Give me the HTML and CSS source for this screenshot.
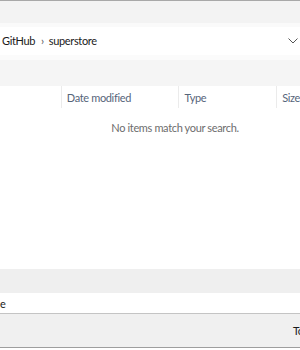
FILE: index.html
```html
<!DOCTYPE html>
<html lang="en">
  <head>
    <meta charset="UTF-8" />
    <meta name="viewport" content="width=device-width, initial-scale=1.0" />
    <title>Save As</title>
    <link rel="stylesheet" href="styles.css">
  </head>
  <body>
    <div class="dialog">

      <div class="toolbar"></div>

      <div class="address">
        <span class="crumb">GitHub</span>
        <span class="crumb-sep">&#8250;</span>
        <span class="crumb">superstore</span>
        <svg class="chevron" width="10" height="6" viewBox="0 0 10 6">
          <path d="M0.5 0.5 L5 5 L9.5 0.5" fill="none" stroke="#555" stroke-width="1"/>
        </svg>
      </div>

      <div class="command-bar"></div>

      <div class="file-list">
        <div class="list-header">
          <div class="col col-name"></div>
          <div class="col col-date">Date modified</div>
          <div class="col col-type">Type</div>
          <div class="col col-size">Size</div>
        </div>
        <div class="empty-msg">No items match your search.</div>
      </div>

      <div class="details-bar"></div>

      <div class="filename-row">
        <span class="filename">e</span>
      </div>

      <div class="footer">
        <span class="footer-btn">Tools</span>
      </div>

    </div>
  </body>
</html>
```

FILE: styles.css
```css
* {
  box-sizing: border-box;
}
body {
  margin: 0;
  padding: 0;
  overflow: hidden;
  font-family: 'Segoe UI', Lato, 'Noto Sans', sans-serif;
  font-size: 11px;
  letter-spacing: -0.35px;
  color: #1a1a1a;
  background-color: white;
}
.dialog {
  width: 300px;
  height: 350px;
  overflow: hidden;
  border-top: 1px solid #a8a8a8;
}
.toolbar {
  height: 26px;
  background-color: #f3f3f3;
  border-bottom: 4px solid #fafafa;
}
.address {
  display: flex;
  align-items: center;
  height: 33px;
  padding-left: 2px;
  padding-bottom: 1px;
  background-color: white;
  border-bottom: 5px solid #fbfbfb;
}
.crumb {
  color: #1a1a1a;
}
.crumb-sep {
  margin: 0 5px 0 6px;
  color: #555;
}
.chevron {
  margin-left: auto;
  margin-right: 2px;
}
.command-bar {
  height: 26px;
  background-color: #f5f5f5;
}
.file-list {
  height: 183px;
  background-color: white;
}
.list-header {
  display: flex;
  height: 22px;
}
.col {
  display: flex;
  align-items: center;
  padding-left: 5px;
  color: #56657a;
  white-space: nowrap;
  border-left: 1px solid #ebebeb;
}
.col-name {
  width: 61px;
  border-left: none;
}
.col-date {
  width: 118px;
}
.col-type {
  width: 98px;
}
.col-size {
  flex: 1;
}
.empty-msg {
  margin-top: 13px;
  text-align: center;
  padding-left: 50px;
  color: #6d6d6d;
}
.details-bar {
  height: 24px;
  background-color: #efefef;
}
.filename-row {
  height: 21px;
  display: flex;
  align-items: center;
  background-color: white;
  border-bottom: 1px solid #c4c4c4;
}
.footer {
  display: flex;
  align-items: center;
  height: 34px;
  padding-left: 293px;
  white-space: nowrap;
  background-color: #f0f0f0;
  border-bottom: 1px solid #9e9e9e;
}
```
